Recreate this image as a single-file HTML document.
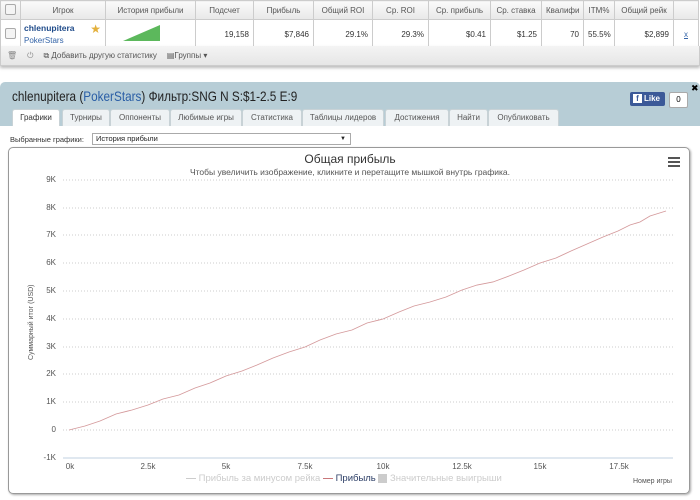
<!DOCTYPE html>
<html><head><meta charset="utf-8"><style>
body{margin:0;width:700px;height:500px;background:#fff;font-family:"Liberation Sans","DejaVu Sans",sans-serif;position:relative;overflow:hidden}
.a{position:absolute}
table{border-collapse:collapse;position:absolute;left:0;top:0;width:698px;table-layout:fixed;font-size:8px;color:#333}
td{border:1px solid #ccc;height:26px;text-align:right;padding:0 4px;white-space:nowrap;overflow:hidden}
tr.h td{height:18px;background:linear-gradient(#fafafa,#e8e8e8);text-align:center;color:#555}
.cb{display:inline-block;width:9px;height:9px;border:1px solid #aaa;border-radius:2px;background:#f4f4f4}
.tab{position:absolute;top:109px;height:16px;background:#eef2f4;border:1px solid #c8d2d6;border-bottom:none;font-size:8px;color:#555;text-align:center;line-height:16px;border-radius:3px 3px 0 0}
.yl{position:absolute;left:30px;width:26px;text-align:right;font-size:8px;color:#555}
.xl{position:absolute;top:462px;font-size:8px;color:#555;width:30px;text-align:center}
</style></head><body>
<table>
<colgroup><col style="width:20px"><col style="width:85px"><col style="width:90px"><col style="width:58px"><col style="width:60px"><col style="width:59px"><col style="width:56px"><col style="width:62px"><col style="width:51px"><col style="width:42px"><col style="width:31px"><col style="width:59px"><col style="width:25px"></colgroup>
<tr class="h"><td><span class="cb"></span></td><td>Игрок</td><td>История прибыли</td><td>Подсчет</td><td>Прибыль</td><td>Общий ROI</td><td>Ср. ROI</td><td>Ср. прибыль</td><td>Ср. ставка</td><td>Квалифи</td><td>ITM%</td><td>Общий рейк</td><td></td></tr>
<tr><td style="text-align:center"><span class="cb"></span></td><td style="text-align:left;padding:0 3px;position:relative"><div style="color:#1f4b8a;font-weight:bold;font-size:8.5px">chlenupitera</div><div style="color:#3565a8;font-size:8px;margin-top:3px">PokerStars</div><span style="position:absolute;right:4px;top:2px;color:#e3b03c;font-size:12px">★</span></td><td style="padding:0"><svg width="90" height="26"><polygon points="17,21 54,21 54,5" fill="#5cb85c"/></svg></td><td>19,158</td><td>$7,846</td><td>29.1%</td><td>29.3%</td><td>$0.41</td><td>$1.25</td><td>70</td><td>55.5%</td><td>$2,899</td><td style="text-align:center;color:#3565a8;text-decoration:underline">x</td></tr>
</table>
<div class="a" style="left:0;top:46px;width:698px;height:19px;background:linear-gradient(#f4f4f4,#e6e6e6);border:1px solid #ccc;border-top:none;box-shadow:0 2px 3px #bbb;font-size:8px;color:#555;line-height:19px">
<span style="margin-left:6px;color:#888">🗑</span><span style="margin-left:10px;color:#888">⏻</span><span style="margin-left:10px">⧉ Добавить другую статистику</span><span style="margin-left:10px">▤Группы ▾</span></div>
<div class="a" style="left:0;top:82px;width:700px;height:418px;background:#b7cdd6;border-radius:5px 5px 0 0"></div>
<div class="a" style="left:12px;top:88px;font-size:14px;color:#222;white-space:nowrap;transform:scaleX(0.84);transform-origin:0 0">chlenupitera (<span style="color:#2a5ea6">PokerStars</span>) Фильтр:SNG N S:$1-2.5 E:9</div>
<div class="a" style="left:691px;top:83px;font-size:9px;font-weight:bold">✖</div>
<div class="a" style="left:630px;top:92px;width:35px;height:14px;background:#3b5998;border-radius:2px;color:#fff;font-size:8px;font-weight:bold;line-height:14px"><span style="display:inline-block;background:#fff;color:#3b5998;width:9px;height:9px;line-height:10px;text-align:center;margin:0 2px 0 3px">f</span>Like</div>
<div class="a" style="left:669px;top:92px;width:17px;height:14px;background:#fff;border:1px solid #aaa;border-radius:2px;font-size:8px;line-height:14px;text-align:center">0</div>
<div class="tab" style="left:12px;width:46px;background:#fff;height:17px;color:#333">Графики</div>
<div class="tab" style="left:62px;width:46px">Турниры</div>
<div class="tab" style="left:110px;width:58px">Оппоненты</div>
<div class="tab" style="left:170px;width:70px">Любимые игры</div>
<div class="tab" style="left:242px;width:58px">Статистика</div>
<div class="tab" style="left:302px;width:80px">Таблицы лидеров</div>
<div class="tab" style="left:385px;width:62px">Достижения</div>
<div class="tab" style="left:449px;width:37px">Найти</div>
<div class="tab" style="left:488px;width:69px">Опубликовать</div>
<div class="a" style="left:0;top:126px;width:700px;height:374px;background:#fff"></div>
<div class="a" style="left:10px;top:135px;font-size:7.5px;color:#333">Выбранные графики:</div>
<div class="a" style="left:92px;top:133px;width:254px;height:10px;border:1px solid #aaa;font-size:7.5px;line-height:10px;padding-left:3px;color:#222">История прибыли<span style="position:absolute;right:4px;font-size:6px">▼</span></div>
<div class="a" style="left:8px;top:147px;width:680px;height:345px;border:1px solid #999;border-radius:5px;box-shadow:1px 1px 2px #aaa"></div>
<div class="a" style="left:0;top:152px;width:700px;text-align:center;font-size:12px;color:#333">Общая прибыль</div>
<div class="a" style="left:0;top:167px;width:700px;text-align:center;font-size:8.5px;color:#555">Чтобы увеличить изображение, кликните и перетащите мышкой внутрь графика.</div>
<div class="a" style="left:668px;top:157px;width:12px"><div style="height:2px;background:#555;margin-bottom:2px"></div><div style="height:2px;background:#555;margin-bottom:2px"></div><div style="height:2px;background:#555"></div></div>
<div class="a" style="left:28px;top:360px;transform:rotate(-90deg);transform-origin:0 0;font-size:7px;color:#555;white-space:nowrap">Суммарный итог (USD)</div>
<svg class="a" style="left:0;top:0" width="700" height="500">
<g stroke="#ccc" stroke-dasharray="1,2" stroke-width="1">
<line x1="63" x2="673" y1="180" y2="180"/><line x1="63" x2="673" y1="208" y2="208"/><line x1="63" x2="673" y1="235" y2="235"/><line x1="63" x2="673" y1="263" y2="263"/><line x1="63" x2="673" y1="291" y2="291"/><line x1="63" x2="673" y1="319" y2="319"/><line x1="63" x2="673" y1="347" y2="347"/><line x1="63" x2="673" y1="374" y2="374"/><line x1="63" x2="673" y1="402" y2="402"/><line x1="63" x2="673" y1="430" y2="430"/></g>
<line x1="63" x2="673" y1="458" y2="458" stroke="#c0d0e0"/>
<polyline fill="none" stroke="#d4999b" stroke-width="0.9" points="69,430 85,426 100,421 116,414 132,410 148,405 163,399 179,395 195,388 210,383 226,376 242,371 257,365 273,358 289,352 305,347 320,340 336,334 352,330 367,323 383,319 399,312 414,306 430,302 446,297 462,290 477,285 493,282 509,276 524,270 540,263 556,258 571,251 587,244 603,237 618,231 630,225 640,222 650,216 666,211"/>
</svg>
<div class="yl" style="top:175px">9K</div><div class="yl" style="top:203px">8K</div><div class="yl" style="top:230px">7K</div><div class="yl" style="top:258px">6K</div><div class="yl" style="top:286px">5K</div><div class="yl" style="top:314px">4K</div><div class="yl" style="top:342px">3K</div><div class="yl" style="top:369px">2K</div><div class="yl" style="top:397px">1K</div><div class="yl" style="top:425px">0</div><div class="yl" style="top:453px">-1K</div>
<div class="xl" style="left:55px">0k</div><div class="xl" style="left:133px">2.5k</div><div class="xl" style="left:211px">5k</div><div class="xl" style="left:290px">7.5k</div><div class="xl" style="left:368px">10k</div><div class="xl" style="left:447px">12.5k</div><div class="xl" style="left:525px">15k</div><div class="xl" style="left:604px">17.5k</div>
<div class="a" style="left:186px;top:473px;font-size:9.5px;color:#ccc;white-space:nowrap"><span style="display:inline-block;width:10px;height:1px;background:#ccc;vertical-align:middle"></span> Прибыль за минусом рейка <span style="display:inline-block;width:10px;height:1px;background:#c9777a;vertical-align:middle"></span> <span style="color:#2c3e66">Прибыль</span> <span style="display:inline-block;width:9px;height:9px;background:#ccc;vertical-align:middle"></span> Значительные выигрыши</div>
<div class="a" style="left:633px;top:478px;font-size:7px;color:#555">Номер игры</div>
</body></html>
